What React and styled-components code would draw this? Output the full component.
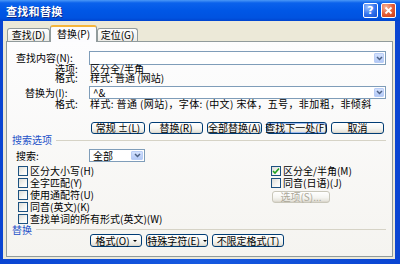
import React from 'react';
import styled, { createGlobalStyle } from 'styled-components';

const Global = createGlobalStyle`
  html, body { margin: 0; padding: 0; background: #fff; overflow: hidden; }
  * { box-sizing: border-box; }
  body { font-family: "Noto Sans CJK SC", "Noto Sans", sans-serif; }
`;

const Window = styled.div`
  width: 400px;
  height: 264px;
  display: flex;
  flex-direction: column;
  background: #0a48d6;
  font-family: "Noto Sans CJK SC", "Noto Sans", sans-serif;
  font-size: 10px;
  color: #000;
`;

const TitleBar = styled.div`
  flex: none;
  height: 21px;
  display: flex;
  align-items: center;
  padding: 0 4px 0 6px;
  background: linear-gradient(180deg, #4a98f7 0%, #0b62ec 14%, #0057e6 50%, #0053e0 85%, #0044cf 100%);
`;

const TitleText = styled.div`
  flex: 1;
  color: #fff;
  font-weight: bold;
  font-size: 11px;
  line-height: 12px;
  letter-spacing: 0.3px;
  text-shadow: 1px 1px 0 #0a2a8a;
`;

const CaptionButton = styled.div`
  width: 15px;
  height: 15px;
  margin-left: ${p => (p.$close ? '3px' : '0')};
  border: 1px solid #fff;
  border-radius: 2px;
  display: flex;
  align-items: center;
  justify-content: center;
  color: #fff;
  font-family: "DejaVu Sans", sans-serif;
  font-weight: bold;
  font-size: 11px;
  line-height: 1;
  background: ${p =>
    p.$close
      ? 'radial-gradient(circle at 30% 25%, #f6b59c 0%, #e45a33 55%, #c33c16 100%)'
      : 'radial-gradient(circle at 30% 25%, #9cc0ff 0%, #2f72ee 55%, #1a4fd0 100%)'};
`;

const Frame = styled.div`
  flex: 1;
  display: flex;
  padding: 0 5px 5px 3px;
  background: linear-gradient(90deg, #0a45d2 0%, #1659e0 50%, #0a45d2 100%);
`;

const Body = styled.div`
  flex: 1;
  display: flex;
  flex-direction: column;
  background: #ece9d8;
  padding: 4px 2px 2px 3px;
`;

const TabRow = styled.div`
  display: flex;
  align-items: flex-end;
  height: 17px;
  margin-bottom: -1px;
  padding-left: 1px;
  position: relative;
  z-index: 1;
`;

const Tab = styled.div`
  width: ${p => p.$w}px;
  height: ${p => (p.$active ? 17 : 13)}px;
  margin-bottom: ${p => (p.$active ? 0 : 1)}px;
  display: flex;
  align-items: center;
  justify-content: center;
  line-height: 10px;
  border: 1px solid #919b9c;
  border-bottom: none;
  border-top: ${p => (p.$active ? '2px solid #f5b53a' : '1px solid #919b9c')};
  border-radius: 3px 3px 0 0;
  background: ${p => (p.$active ? '#fcfcfe' : 'linear-gradient(#ffffff, #ecebe6)')};
  padding-bottom: ${p => (p.$active ? 1 : 0)}px;
`;

const Panel = styled.div`
  flex: 1;
  display: flex;
  flex-direction: column;
  border: 1px solid #919b9c;
  background: linear-gradient(#fdfdfe, #f5f4f0);
  padding: 9px 6px 0 5px;
`;

const FormGrid = styled.div`
  display: grid;
  grid-template-columns: 66px 1fr;
  column-gap: 11px;
  align-items: center;
`;

const Label = styled.div`
  padding-left: ${p => p.$indent || 0}px;
  height: ${p => p.$h || 10}px;
  line-height: ${p => p.$h || 10}px;
  margin-top: ${p => p.$mt || 0}px;
  white-space: nowrap;
`;

const Value = styled.div`
  height: ${p => p.$h || 10}px;
  line-height: ${p => p.$h || 10}px;
  margin-top: ${p => p.$mt || 0}px;
  padding-left: 1px;
  letter-spacing: ${p => p.$ls || 0}px;
  white-space: nowrap;
`;

const Combo = styled.div`
  width: ${p => (p.$w ? `${p.$w}px` : 'auto')};
  height: ${p => p.$h}px;
  margin-top: ${p => p.$mt || 0}px;
  border: 1px solid #7f9db9;
  background: #fff;
  display: flex;
  align-items: center;
  padding: 0 1px 0 3px;
`;

const ComboText = styled.div`
  flex: 1;
  line-height: 10px;
  white-space: nowrap;
`;

const DropButton = styled.div`
  width: ${p => p.$w || 10}px;
  height: ${p => p.$h || 10}px;
  border: 1px solid #b9cdf6;
  border-radius: 1px;
  background: linear-gradient(#d3e1fd, #b3c9f6);
  display: flex;
  align-items: center;
  justify-content: center;
`;

const ButtonRow = styled.div`
  grid-column: 2;
  display: flex;
  gap: ${p => p.$gap || 4}px;
  margin-top: ${p => p.$mt || 0}px;
  padding-left: ${p => p.$pl || 0}px;
`;

const Button = styled.button`
  width: ${p => p.$w}px;
  height: ${p => p.$h || 12}px;
  padding: 0;
  font-family: inherit;
  font-size: 10px;
  line-height: 10px;
  border: 1px solid ${p => (p.disabled ? '#c9c7ba' : '#003c74')};
  border-radius: 3px;
  background: linear-gradient(#ffffff 0%, #f5f5f1 55%, #e6e4dc 88%, #d6d0c5 100%);
  color: ${p => (p.disabled ? '#aca899' : '#000')};
  box-shadow: ${p => (p.$default ? 'inset 0 0 0 1px #9cb9ef' : 'none')};
  display: flex;
  align-items: center;
  justify-content: center;
  gap: 3px;
  white-space: nowrap;
`;

const Caret = styled.span`
  width: 0;
  height: 0;
  border-left: 2px solid transparent;
  border-right: 2px solid transparent;
  border-top: 2px solid #000;
`;

const SectionHeader = styled.div`
  display: flex;
  align-items: center;
  gap: 4px;
  height: ${p => p.$h || 10}px;
  line-height: ${p => p.$h || 10}px;
  margin-top: ${p => p.$mt || 0}px;
  color: #2350c8;
`;

const HeaderLine = styled.div`
  flex: 1;
  height: 1px;
  background: #d6d3c6;
`;

const SearchRow = styled.div`
  display: grid;
  grid-template-columns: 66px 1fr;
  column-gap: 11px;
  align-items: center;
  margin-top: 4px;
`;

const OptionsGrid = styled.div`
  display: grid;
  grid-template-columns: 253px 1fr;
  margin-top: 3px;
  padding-left: 6px;
`;

const Column = styled.div`
  display: flex;
  flex-direction: column;
`;

const CheckRow = styled.div`
  height: 12px;
  display: flex;
  align-items: center;
  gap: 2px;
  line-height: 10px;
  white-space: nowrap;
`;

const Box = styled.span`
  flex: none;
  width: 10px;
  height: 10px;
  border: 1px solid #1c5180;
  background: linear-gradient(135deg, #dcdcd7 0%, #f6f6f3 60%, #ffffff 100%);
  display: flex;
  align-items: center;
  justify-content: center;
`;

const ChevronDown = () => (
  <svg width="7" height="5" viewBox="0 0 7 5">
    <path d="M1 1 L3.5 3.5 L6 1" fill="none" stroke="#4d6185" strokeWidth="1.5" />
  </svg>
);

const Check = ({ checked }) => (
  <Box>
    {checked && (
      <svg width="8" height="8" viewBox="0 0 8 8">
        <path d="M1 4 L3 6 L7 1.5" fill="none" stroke="#21a121" strokeWidth="1.6" />
      </svg>
    )}
  </Box>
);

const leftOptions = [
  '区分大小写(H)',
  '全字匹配(Y)',
  '使用通配符(U)',
  '同音(英文)(K)',
  '查找单词的所有形式(英文)(W)',
];

export default function App() {
  return (
    <>
      <Global />
      <Window>
        <TitleBar>
          <TitleText>查找和替换</TitleText>
          <CaptionButton>?</CaptionButton>
          <CaptionButton $close>
            <svg width="9" height="9" viewBox="0 0 9 9">
              <path d="M1.5 1.5 L7.5 7.5 M7.5 1.5 L1.5 7.5" stroke="#fff" strokeWidth="1.8" />
            </svg>
          </CaptionButton>
        </TitleBar>
        <Frame>
          <Body>
            <TabRow>
              <Tab $w={43}>查找(D)</Tab>
              <Tab $w={47} $active>替换(P)</Tab>
              <Tab $w={41}>定位(G)</Tab>
            </TabRow>
            <Panel>
              <FormGrid>
                <Label $indent={4} $h={14}>查找内容(N):</Label>
                <Combo $h={14}>
                  <ComboText />
                  <DropButton><ChevronDown /></DropButton>
                </Combo>
                <Label $indent={43} $h={9} $mt={-1}>选项:</Label>
                <Value $h={9} $mt={-1}>区分全/半角</Value>
                <Label $indent={43} $h={9}>格式:</Label>
                <Value $h={9}>样式: 普通 (网站)</Value>
                <Label $indent={13} $h={13} $mt={4}>替换为(I):</Label>
                <Combo $h={13} $mt={4}>
                  <ComboText>^&amp;</ComboText>
                  <DropButton $h={9}><ChevronDown /></DropButton>
                </Combo>
                <Label $indent={43}>格式:</Label>
                <Value $ls={0.4}>样式: 普通 (网站)，字体: (中文) 宋体，五号，非加粗，非倾斜</Value>
                <ButtonRow $mt={13} $pl={2}>
                  <Button $w={54}>常规 ±(L)</Button>
                  <Button $w={54}>替换(R)</Button>
                  <Button $w={55}>全部替换(A)</Button>
                  <Button $w={61} $default>查找下一处(F)</Button>
                  <Button $w={53}>取消</Button>
                </ButtonRow>
              </FormGrid>

              <SectionHeader $mt={1}>
                <span>搜索选项</span>
                <HeaderLine />
              </SectionHeader>

              <SearchRow>
                <Label $indent={4}>搜索:</Label>
                <Combo $w={56} $h={13}>
                  <ComboText>全部</ComboText>
                  <DropButton $w={12} $h={9}><ChevronDown /></DropButton>
                </Combo>
              </SearchRow>

              <OptionsGrid>
                <Column>
                  {leftOptions.map(text => (
                    <CheckRow key={text}>
                      <Check />
                      <span>{text}</span>
                    </CheckRow>
                  ))}
                </Column>
                <Column>
                  <CheckRow>
                    <Check checked />
                    <span>区分全/半角(M)</span>
                  </CheckRow>
                  <CheckRow>
                    <Check />
                    <span>同音(日语)(J)</span>
                  </CheckRow>
                  <ButtonRow $mt={2} $pl={1}>
                    <Button $w={58} disabled>选项(S)...</Button>
                  </ButtonRow>
                </Column>
              </OptionsGrid>

              <SectionHeader $h={9}>
                <span>替换</span>
                <HeaderLine />
              </SectionHeader>

              <FormGrid>
                <ButtonRow $pl={1} $gap={4}>
                  <Button $w={52} $h={13}>格式(O)<Caret /></Button>
                  <Button $w={62} $h={13}>特殊字符(E)<Caret /></Button>
                  <Button $w={72} $h={13}>不限定格式(T)</Button>
                </ButtonRow>
              </FormGrid>
            </Panel>
          </Body>
        </Frame>
      </Window>
    </>
  );
}
